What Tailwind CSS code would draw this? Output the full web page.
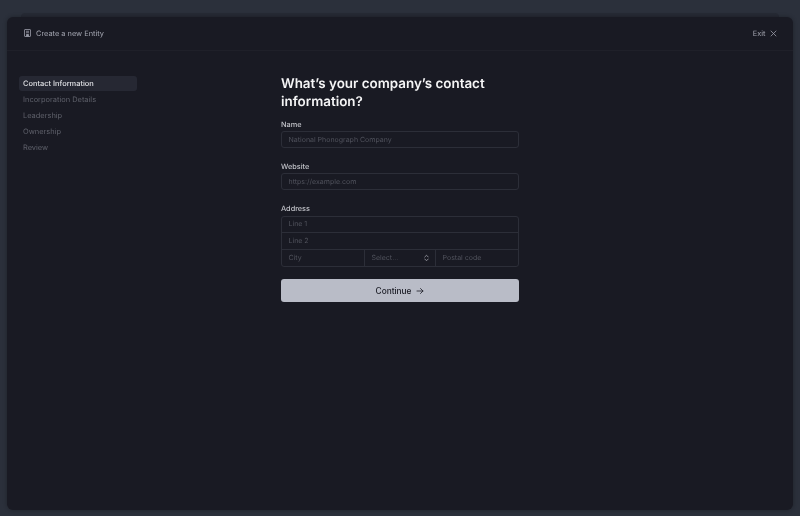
<!DOCTYPE html>
<html lang="en">
<head>
    <meta charset="UTF-8">
    <meta name="viewport" content="width=device-width, initial-scale=1.0">
    <title>Create a new Entity</title>
    <script src="https://cdn.jsdelivr.net/npm/@tailwindcss/browser@4"></script>
</head>
<body class="bg-[#2b303b] h-[516px] overflow-hidden font-['Inter',sans-serif] [text-rendering:geometricPrecision]">
    <!-- Stacked sheet behind -->
    <div class="pt-[13px]">
        <div class="mx-[21px] h-[4px] rounded-t-md bg-[#262a34]"></div>
    </div>

    <!-- Main sheet -->
    <div class="mx-[7px] h-[493px] rounded-md bg-[#191a23] shadow-[0_0_4px_rgba(0,0,0,0.3)] [will-change:transform]">
        <!-- Header -->
        <div class="h-[34px] flex items-center justify-between pl-[17px] pr-[16.5px] border-b border-[#1f2029]">
            <div class="flex items-center gap-[5px] text-[7.4px] text-[#a3a5b0]">
                <svg class="w-[7px] h-[8px]" viewBox="0 0 14 16" fill="none" stroke="#9a9ca8" stroke-width="1.6">
                    <rect x="1" y="1" width="12" height="14" rx="1"/>
                    <path d="M4 4.5h6M4 7.5h6"/>
                    <path d="M5 15v-4h4v4" fill="#9a9ca8"/>
                </svg>
                <span>Create a new Entity</span>
            </div>
            <div class="flex items-center gap-[4px] text-[7.4px] text-[#a3a5b0]">
                <span>Exit</span>
                <svg class="w-[7px] h-[7px]" viewBox="0 0 14 14" fill="none" stroke="#9a9ca8" stroke-width="1.6" stroke-linecap="round">
                    <path d="M2 2l10 10M12 2L2 12"/>
                </svg>
            </div>
        </div>

        <div class="flex pt-[25px]">
            <!-- Steps -->
            <nav class="w-[118px] ml-[12px] flex flex-col text-[7.45px] text-[#5e606a]">
                <div class="h-[15px] flex items-center px-[4px] rounded-[3px] bg-[#262833] text-[#e0e1e5] font-medium">Contact Information</div>
                <div class="h-[16px] mt-[0.5px] flex items-center px-[4px]">Incorporation Details</div>
                <div class="h-[16px] flex items-center px-[4px]">Leadership</div>
                <div class="h-[16px] flex items-center px-[4px]">Ownership</div>
                <div class="h-[16px] flex items-center px-[4px]">Review</div>
            </nav>

            <!-- Form -->
            <main class="w-[238px] ml-[144px]">
                <h1 class="text-[13.4px] leading-[17.5px] font-semibold text-[#f5f5f6]">What’s your company’s contact information?</h1>

                <label class="block mt-[7.5px] text-[7.3px] leading-[12px] font-medium text-[#c3c4ca]">Name</label>
                <div class="mt-[0.5px] h-[17px] flex items-center pt-[1px] px-[6.5px] rounded-[3px] border border-[#2c2e38] text-[7px] text-[#50525c]">National Phonograph Company</div>

                <label class="block mt-[12.8px] text-[7.3px] leading-[12px] font-medium text-[#c3c4ca]">Website</label>
                <div class="mt-[0.5px] h-[17px] flex items-center pt-[1px] px-[6.5px] rounded-[3px] border border-[#2c2e38] text-[7px] text-[#50525c]">https://example.com</div>

                <label class="block mt-[12.8px] text-[7.3px] leading-[12px] font-medium text-[#c3c4ca]">Address</label>
                <div class="mt-[0.5px] rounded-[3px] border border-[#2c2e38] text-[7px] text-[#50525c]">
                    <div class="h-[16px] flex items-center pt-[1px] px-[6.5px] border-b border-[#2c2e38]">Line 1</div>
                    <div class="h-[17px] flex items-center pt-[1px] px-[6.5px] border-b border-[#2c2e38]">Line 2</div>
                    <div class="h-[16px] flex">
                        <div class="w-[83px] flex items-center pt-[1px] px-[6.5px] border-r border-[#2c2e38]">City</div>
                        <div class="w-[71px] flex items-center justify-between pt-[1px] pl-[6.5px] pr-[6px] border-r border-[#2c2e38]">
                            <span>Select...</span>
                            <svg class="w-[5px] h-[8px]" viewBox="0 0 10 16" fill="none" stroke="#a5a6ae" stroke-width="1.6" stroke-linecap="round" stroke-linejoin="round">
                                <path d="M1.5 6L5 2.5 8.5 6M1.5 10L5 13.5 8.5 10"/>
                            </svg>
                        </div>
                        <div class="flex-1 flex items-center pt-[1px] px-[6.5px]">Postal code</div>
                    </div>
                </div>

                <button class="mt-[12.4px] w-full h-[23.5px] flex items-center justify-center gap-[5px] rounded-[3px] bg-[#b9bcc7] text-[8.3px] font-medium text-[#191a23]">
                    Continue
                    <svg class="w-[8px] h-[8px]" viewBox="0 0 16 16" fill="none" stroke="#191a23" stroke-width="1.6" stroke-linecap="round" stroke-linejoin="round">
                        <path d="M2 8h12M9 3l5 5-5 5"/>
                    </svg>
                </button>
            </main>
        </div>
    </div>
</body>
</html>
